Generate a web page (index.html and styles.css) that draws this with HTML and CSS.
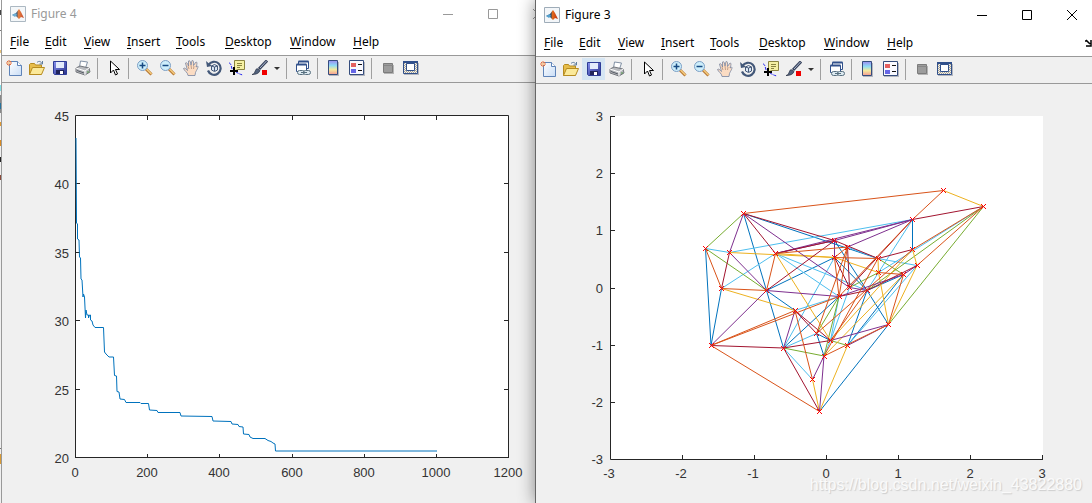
FILE: index.html
```html
<!DOCTYPE html>
<html lang="en">
<head>
<meta charset="utf-8">
<title>Figures</title>
<link rel="stylesheet" href="styles.css">
</head>
<body>
<svg class="symbols" aria-hidden="true">
  <defs>
    <linearGradient id="jet" x1="0" y1="0" x2="0" y2="1"><stop offset="0" stop-color="#9c8cf0"/><stop offset=".35" stop-color="#8edcf5"/><stop offset=".65" stop-color="#f5eb9c"/><stop offset="1" stop-color="#f49a94"/></linearGradient>
    <linearGradient id="paper" x1="0" y1="0" x2="1" y2="1"><stop offset="0" stop-color="#fff"/><stop offset="1" stop-color="#c9ddf6"/></linearGradient>
    <linearGradient id="flame"><stop offset="0" stop-color="#2a76a8"/><stop offset=".4" stop-color="#27405e"/><stop offset=".55" stop-color="#e66a1c"/><stop offset="1" stop-color="#b92c10"/></linearGradient>
    <linearGradient id="disk" x1="0" y1="0" x2="1" y2="1"><stop offset="0" stop-color="#8791ef"/><stop offset="1" stop-color="#27308c"/></linearGradient>
    <pattern id="check" width="2" height="2" patternUnits="userSpaceOnUse"><path d="M0 0h2v2H0z" fill="#eee"/><path d="M0 0h1v1H0zM1 1h1v1H1z" fill="#aaa38e"/></pattern>
  </defs>
  <symbol id="i-matlab" viewBox="0 0 16 16"><path d="M.5.5h15v15H.5z" fill="#f3f6f9" stroke="#9eacb8"/><path d="M2 9l4-2 3-4 2 3 3 6-3-1-2 2-3-3z" fill="url(#flame)"/><path d="M2 9l4-2 1 2-2 2z" fill="#54a0cd"/></symbol>
  <symbol id="i-new" viewBox="0 0 16 16"><path d="M3.500 1.500h8l4 4v10h-12z" fill="url(#paper)" stroke="#5e83b8"/><path d="M11.500 1.500v4h4" fill="#fff" stroke="#5e83b8"/><path d="M3 0v6M0 3h6M1 1l4 4M5 1L1 5" stroke="#e5713e"/><circle cx="3" cy="3" r="1" fill="#ffeab4"/></symbol>
  <symbol id="i-open" viewBox="0 0 16 16"><path d="M.5 14.500v-10l1-1h4l1 1.500h6v9z" fill="#e7bd4b" stroke="#b68b20"/><path d="M.5 14.500l3-7h12l-3 7z" fill="#fbe99a" stroke="#b68b20"/><path d="M8 2.500c2-2 4-1 5 1M13.500 1v3h-3" fill="none" stroke="#5f7c9c"/></symbol>
  <symbol id="i-save" viewBox="0 0 16 16"><path d="M1.500 1.500h13v13h-12l-1-1z" fill="url(#disk)" stroke="#2e3c96"/><path d="M4 2h8v6H4z" fill="#e3ebfb"/><path d="M4 10h8v4H4z" fill="#20245a"/><path d="M8 11h3v3H8z" fill="#fff"/></symbol>
  <symbol id="i-print" viewBox="0 0 16 16"><path d="M5.500 1l7 1-2 6-6-1z" fill="#fff" stroke="#8291a5"/><path d="M1 8l4-2 9 2 1 4-5 3-9-3z" fill="#b9bbbf" stroke="#74777d"/><path d="M1 8l9 3 4-3M10 11v4" fill="none" stroke="#fff"/><path d="M2 10.500l7 2.500" stroke="#555a64"/><path d="M12 12h2" stroke="#4d9444"/></symbol>
  <symbol id="i-pointer" viewBox="0 0 16 16"><path d="M4.500 1v12l3-3 2 5 2-1-2-4.500h4z" fill="#fff" stroke="#000"/></symbol>
  <symbol id="i-zoomin" viewBox="0 0 16 16"><path d="M9 9l5.500 5.500" stroke="#b57531" stroke-width="3"/><path d="M9.500 9l5 5" stroke="#f5cc7d" stroke-width="1.500"/><circle cx="5.500" cy="5.500" r="5" fill="#cdeefb" stroke="#7c9fc5"/><path d="M2.500 5.500h6M5.500 2.500v6" stroke="#164a83" stroke-width="1.500"/></symbol>
  <symbol id="i-zoomout" viewBox="0 0 16 16"><path d="M9 9l5.500 5.500" stroke="#b57531" stroke-width="3"/><path d="M9.500 9l5 5" stroke="#f5cc7d" stroke-width="1.500"/><circle cx="5.500" cy="5.500" r="5" fill="#cdeefb" stroke="#7c9fc5"/><path d="M2.500 5.500h6" stroke="#164a83" stroke-width="1.500"/></symbol>
  <symbol id="i-pan" viewBox="0 0 16 16"><path d="M5 15.500c0-3-4-5-4.500-7 1-1 2 0 4 2L2.500 3c1-1 2 0 3 3L5.500 1c1-1 2 0 2.500 4L9 .5c1-.5 2 .5 1.500 5L13 2c1 0 1.500 1 0 5l1.500-1c1.500 1-1 4-2 6.500l-.5 3z" fill="#fbdcc3" stroke="#7784a0" stroke-width=".8"/><path d="M5 6l1 3M8 5l.5 4M11 6l-.5 3" stroke="#9b765f" stroke-width=".6"/></symbol>
  <symbol id="i-rotate" viewBox="0 0 16 16"><path d="M2.500 5A6.500 6.500 0 1 1 2 10.500" fill="none" stroke="#435879" stroke-width="2.200"/><path d="M0 1l1 6 5-1z" fill="#435879"/><path d="M5.500 6l3-1.500 3 1.500v4l-3 1.500-3-1.500zM5.500 6l3 1 3-1M8.500 7v4" fill="#dce8f5" stroke="#435879"/></symbol>
  <symbol id="i-cursor" viewBox="0 0 16 16"><path d="M5.500.5h10v9h-7l-3 2z" fill="#f5f0a3" stroke="#8a8440"/><path d="M8 3.500h5M8 5.500h5M8 7.500h3" stroke="#8a8440"/><path d="M0 3c3 0 2 8 5 8 3 1 4 3 9 4" fill="none" stroke="#2222ee" stroke-dasharray="3 1"/><path d="M5 7v8M1 11h8" stroke="#000" stroke-width="2"/></symbol>
  <symbol id="i-brush" viewBox="0 0 16 16"><path d="M15 .5L7 9" stroke="#38435c" stroke-width="3"/><path d="M14.500 1L8 8" stroke="#aebbd2"/><path d="M0 14.500c3 0 3-5 5-6l3 2c-1 3-4 4-8 4z" fill="#53637d" stroke="#252e42" stroke-width=".7"/><path d="M10 10h5v5h-5z" fill="#f00000"/></symbol>
  <symbol id="i-link" viewBox="0 0 16 16"><path d="M3.500 1.500h10v7h-10z" fill="#fff" stroke="#31508b"/><path d="M3.500 1.500h10" stroke="#31508b" stroke-width="2"/><path d="M1.500 4.500h10v7h-10z" fill="#fff" stroke="#31508b"/><path d="M1.500 4.500h10" stroke="#31508b" stroke-width="2"/><rect x="2.500" y="10.500" width="7" height="4" rx="2" fill="#dce9f0" stroke="#587080"/><rect x="8.500" y="10.500" width="7" height="4" rx="2" fill="#dce9f0" stroke="#587080"/><path d="M6 12.500h6" stroke="#587080"/></symbol>
  <symbol id="i-colorbar" viewBox="0 0 16 16"><path d="M3 2h10v14H3z" fill="#b4b7bf"/><path d="M2.500.5h9v14h-9z" fill="url(#jet)" stroke="#354d7d"/></symbol>
  <symbol id="i-legend" viewBox="0 0 16 16"><path d="M1 2h15v14H1z" fill="#b4b7bf"/><path d="M.5.5h14v14H.5z" fill="#f9f9ff" stroke="#354d7d"/><path d="M2 3h5v4H2z" fill="#e46161"/><path d="M2 9h5v4H2z" fill="#6666e6"/><path d="M9 4.500h4M9 10.500h4" stroke="#111"/></symbol>
  <symbol id="i-hide" viewBox="0 0 16 16"><path d="M4 5h10v9H4z" fill="#b5b5b5"/><path d="M3.500 3.500h9v9h-9z" fill="#9c9c9c" stroke="#7c7c7c"/><path d="M4 5.500h9" stroke="#878787"/></symbol>
  <symbol id="i-dock" viewBox="0 0 16 16"><path d="M1 3h15v12H1z" fill="#b4b7bf"/><path d="M.5 1.500h14v12H.5z" fill="url(#check)" stroke="#31508b"/><path d="M0 2h15" stroke="#31508b" stroke-width="2"/><path d="M3.500 3.500h8v7h-8z" fill="#fff" stroke="#31508b"/></symbol>
  <symbol id="i-min" viewBox="0 0 12 12"><path d="M1 6.500h10" stroke="currentColor"/></symbol>
  <symbol id="i-max" viewBox="0 0 12 12"><path d="M1.500 1.500h9v9h-9z" fill="none" stroke="currentColor"/></symbol>
  <symbol id="i-close" viewBox="0 0 12 12"><path d="M1 1l10 10M11 1L1 11" stroke="currentColor"/></symbol>
</svg>
<main class="desktop">
  <div class="behind"></div>
  <section class="window inactive" data-title="Figure 4">
    <svg class="plot" id="curve" viewBox="2 83 533 420" role="img" aria-label="Convergence curve"></svg>
  </section>
  <section class="window active" data-title="Figure 3" data-pressed="save">
    <svg class="plot" id="graph" viewBox="536 84 556 419" role="img" aria-label="Connected points"></svg>
    <div class="watermark">https://blog.csdn.net/weixin_43822880</div>
  </section>
</main>
<script src="app.js"></script>
</body>
</html>
```

FILE: styles.css
```css
* { box-sizing: border-box; }
body { margin: 0; background: #f0f0f0; font-family: "Noto Sans", "Open Sans", sans-serif; font-size: 12px; color: #000; }
button { border: 0; padding: 0; margin: 0; background: none; font: inherit; color: inherit; }
.symbols { position: absolute; width: 0; height: 0; }
.desktop { display: grid; grid-template-columns: 2px 533fr 557fr; min-height: 100vh; overflow: hidden; }
.behind {
  border-right: 1px solid #999;
  background: linear-gradient(#fff 10px, #444 10px 15px, #fff 15px 30px, #777 30px 31px, #fff 31px 50px, #e8c277 50px 53px, #fff 53px 85px, #7fe0e8 85px 91px, #eee 91px 95px, #888 95px 103px, #28739c 103px 109px, #888 109px 113px, #f0f0f0 113px 122px, #e09a32 122px 126px, #f0f0f0 126px 140px, #d98b22 140px 146px, #f0f0f0 146px 157px, #222 157px 162px, #f0f0f0 162px 175px, #8a4b3b 175px 180px, #f0f0f0 180px 448px, #777 448px 449px, #f0f0f0 449px 454px, #d99b36 454px 464px, #f0f0f0 464px);
}
.window { display: flex; flex-direction: column; min-width: 0; background: #f0f0f0; }
.inactive { overflow: hidden; }
.active { position: relative; z-index: 1; border-left: 1px solid #666; box-shadow: 0 0 16px rgba(0, 0, 0, .45); }
.head { background: #fff; }
.active .head { padding-top: 1px; }
.titlebar { display: flex; align-items: center; height: 27px; padding-left: 8px; }
.titlebar h1 { flex: 1; margin: 0 0 0 5px; font-size: 12px; line-height: 27px; font-weight: 400; }
.logo { width: 16px; height: 16px; }
.inactive .titlebar { color: #999; }
.inactive .logo { opacity: .85; }
.controls { display: flex; gap: 5px; }
.inactive .controls { margin-right: -23px; }
.controls button { display: grid; place-items: center; width: 40px; height: 26px; }
.controls svg { width: 12px; height: 12px; }
.menubar { display: grid; grid-template-columns: 35px 39px 43px 49px 49px 65px 63px auto 1fr; height: 28px; padding: 2px 0 0 8px; align-items: center; }
.menubar button { justify-self: start; line-height: 20px; }
.menubar u { text-underline-offset: 2px; }
.menubar .dock { justify-self: end; width: 8px; height: 8px; overflow: hidden; }
.dock svg { display: block; width: 8px; height: 8px; }
.toolbar { display: flex; height: 28px; padding: 1px 0 3px; border-top: 1px solid #999; border-bottom: 1px solid #999; background: #f0f0f0; }
.tool { display: grid; place-items: center; width: 23px; height: 22px; }
.tool svg { width: 16px; height: 16px; }
.tool.pressed { background: #d5e5f3; }
.more { width: 12px; height: 22px; display: grid; place-items: center; }
.more::before { content: ""; border: 3px solid transparent; border-top-color: #333; border-bottom: 0; }
.sep { width: 8px; height: 21px; margin-top: 1px; background: linear-gradient(#a0a0a0, #a0a0a0) 3px 0 / 1px 100% no-repeat; }
.plot { display: block; width: 100%; height: auto; }
.plot text { font: 13px "Liberation Sans", Arial, sans-serif; fill: #333; }
.middle { text-anchor: middle; }
.end { text-anchor: end; }
.area { fill: #fff; }
.axis { fill: none; stroke: #262626; }
.line { fill: none; stroke: #0072bd; stroke-width: 1; stroke-linejoin: round; }
.mark { fill: none; stroke: #f00; stroke-width: 1; shape-rendering: crispEdges; }
.watermark { position: absolute; right: 10px; bottom: 8px; font: 16px/20px "Liberation Sans", Arial, sans-serif; color: #fafafa; text-shadow: 1px 1px 1px #ccc; }
```

FILE: app.js
```js
const use = id => `<svg aria-hidden="true"><use href="#i-${id}"/></svg>`;
const menus = ["File", "Edit", "View", "Insert", "Tools", "Desktop", "Window", "Help"];
const tools = "new open save print | pointer | zoomin zoomout pan rotate cursor brush more | link | colorbar legend | hide dock".split(" ");

document.querySelectorAll(".window").forEach(win => {
  const head = document.createElement("header");
  head.className = "head";
  const arrow = win.classList.contains("active")
    ? '<button class="dock" aria-label="Dock"><svg viewBox="0 0 8 8"><path d="M1 2h2l3 3M2 1l4 4M7 1v6H2" fill="none" stroke="#000" stroke-width="1.500"/></svg></button>' : "";
  head.innerHTML = `<div class="titlebar"><svg class="logo"><use href="#i-matlab"/></svg><h1>${win.dataset.title}</h1>
    <div class="controls">${[["min", "Minimize"], ["max", "Maximize"], ["close", "Close"]].map(c => `<button aria-label="${c[1]}">${use(c[0])}</button>`).join("")}</div></div>
    <nav class="menubar">${menus.map(m => `<button><u>${m[0]}</u>${m.slice(1)}</button>`).join("")}${arrow}</nav>
    <div class="toolbar" role="toolbar">${tools.map(t => t === "|" ? '<span class="sep"></span>' :
      t === "more" ? '<button class="more" aria-label="Brush colors"></button>' :
      `<button class="tool${win.dataset.pressed === t ? " pressed" : ""}" aria-label="${t}">${use(t)}</button>`).join("")}</div>`;
  win.prepend(head);
});

const label = (x, y, s, cls) => `<text x="${x}" y="${y}" class="${cls}">${s}</text>`;

let out = '<rect class="area" x="75" y="115" width="433" height="343"/>';
let ticks = "M75.500 115.500h433v342h-433z";
for (let i = 0; i <= 6; i++) {
  const x = Math.round(75 + i * 72.17);
  ticks += `M${x + .5} 458v-4M${x + .5} 116v4`;
  out += label(x, 477, i * 200, "middle");
}
for (let i = 0; i <= 5; i++) {
  const y = Math.round(457 - i * 68.4);
  ticks += `M76 ${y + .5}h4M508 ${y + .5}h-4`;
  out += label(69, y + 6, 20 + i * 5, "end");
}
const trace = "76,138 76.500,223 77.500,224 77.500,239 79,240 79.500,257 80.500,258 81,279 82,280 83,297 83.500,294 84.500,297 85.500,318 86,310 87,315 88.500,315 88.500,318 89.500,315 90.500,315 90.500,320 92,321 93,325 95,327.500 103.500,327.500 104.500,352 106,354 109,357 113.500,357 114.500,375.500 116.500,376 117,391.500 119,392 120,399 124.500,399.500 126,402.500 140,402.500 141,403.500 148.500,403.500 149.500,410 157,410.500 158,412.500 180,412.500 181,416 212,416.500 213,421 231,421.500 232,424 238,424.500 239,426.500 243,427 243.500,434 249,434.500 250,437 253,438.500 265,438.500 268,440.500 271,441.500 273,443 275,444 275.500,451 437,451";
document.getElementById("curve").innerHTML = out + `<path class="axis" d="${ticks}"/><polyline class="line" points="${trace}"/>`;

const nodes = {
  A: [743.5, 213.5], B: [705.5, 248.5], C: [729.5, 252.5], D: [775.5, 253.5], E: [721.5, 288.5], F: [766.5, 290.5],
  G: [711, 345.5], H: [783.5, 348], I: [795, 310.5], J: [834.5, 240.5], K: [834.5, 257.5], L: [847.5, 247],
  M: [878, 258.5], N: [912.5, 219.5], O: [943.5, 190.5], P: [983.5, 206.5], Q: [912.5, 249.5], R: [917, 265.5],
  S: [878.5, 272.5], T: [903.5, 274.5], U: [849.5, 287.5], V: [867, 290.5], W: [839, 296.5], X: [816.5, 333.5],
  Y: [830.5, 340.5], Z: [824, 356], a: [847.5, 345.5], b: [888.5, 324.5], c: [812.5, 379.5], d: [819.5, 411.5]
};
const edges = {
  "#0072bd": "AF AM BG EG FK FH FI HW XZ XY aV aT bd bV NQ TV KV JV",
  "#4dbeee": "BC CN DE DW DV HX Hc HK IW YZ YW YU aR NV PS RM ML",
  "#77ac30": "AB BF HZ XW Ya bP PV TM SU ZW",
  "#edb120": "OP CK DK DY EI ZT ad YQ bR bS cd QR SM SK",
  "#7e2f8e": "AC AU CF DN DJ FG FW HI Yb Zc Zd ab NJ NL RT TW KJ UV",
  "#a2142f": "AD AJ NP CE DJ FJ GH HY Hd IY IX NU QM RV MJ LU KU VW",
  "#d95319": "AO ON BE DF DL EF GI GW Gd Ic XL YV Zb NW PQ PR QX TS MK LK LW KW bT ZM"
};
let net = '<rect class="area" x="610" y="116" width="433" height="343"/>';
let axis = "M610.500 116v343.500H1043";
for (let i = -3; i <= 3; i++) {
  const x = Math.round(826 + i * 72), y = Math.round(287.5 - i * 57.17);
  axis += `M${x + .5} 459v-4M611 ${y + .5}h4`;
  net += label(i < 0 ? x - 1 : x, 478, i, "middle") + label(603, y + 5, i, "end");
}
net += `<path class="axis" d="${axis}"/>`;
for (const [color, list] of Object.entries(edges)) {
  net += `<path fill="none" stroke="${color}" d="${list.split(" ").map(e => `M${nodes[e[0]]}L${nodes[e[1]]}`).join("")}"/>`;
}
net += `<path class="mark" d="${Object.values(nodes).map(([x, y]) => `M${Math.floor(x) - 2} ${Math.floor(y) - 2}l5 5m0-5l-5 5`).join("")}"/>`;
document.getElementById("graph").innerHTML = net;
```
